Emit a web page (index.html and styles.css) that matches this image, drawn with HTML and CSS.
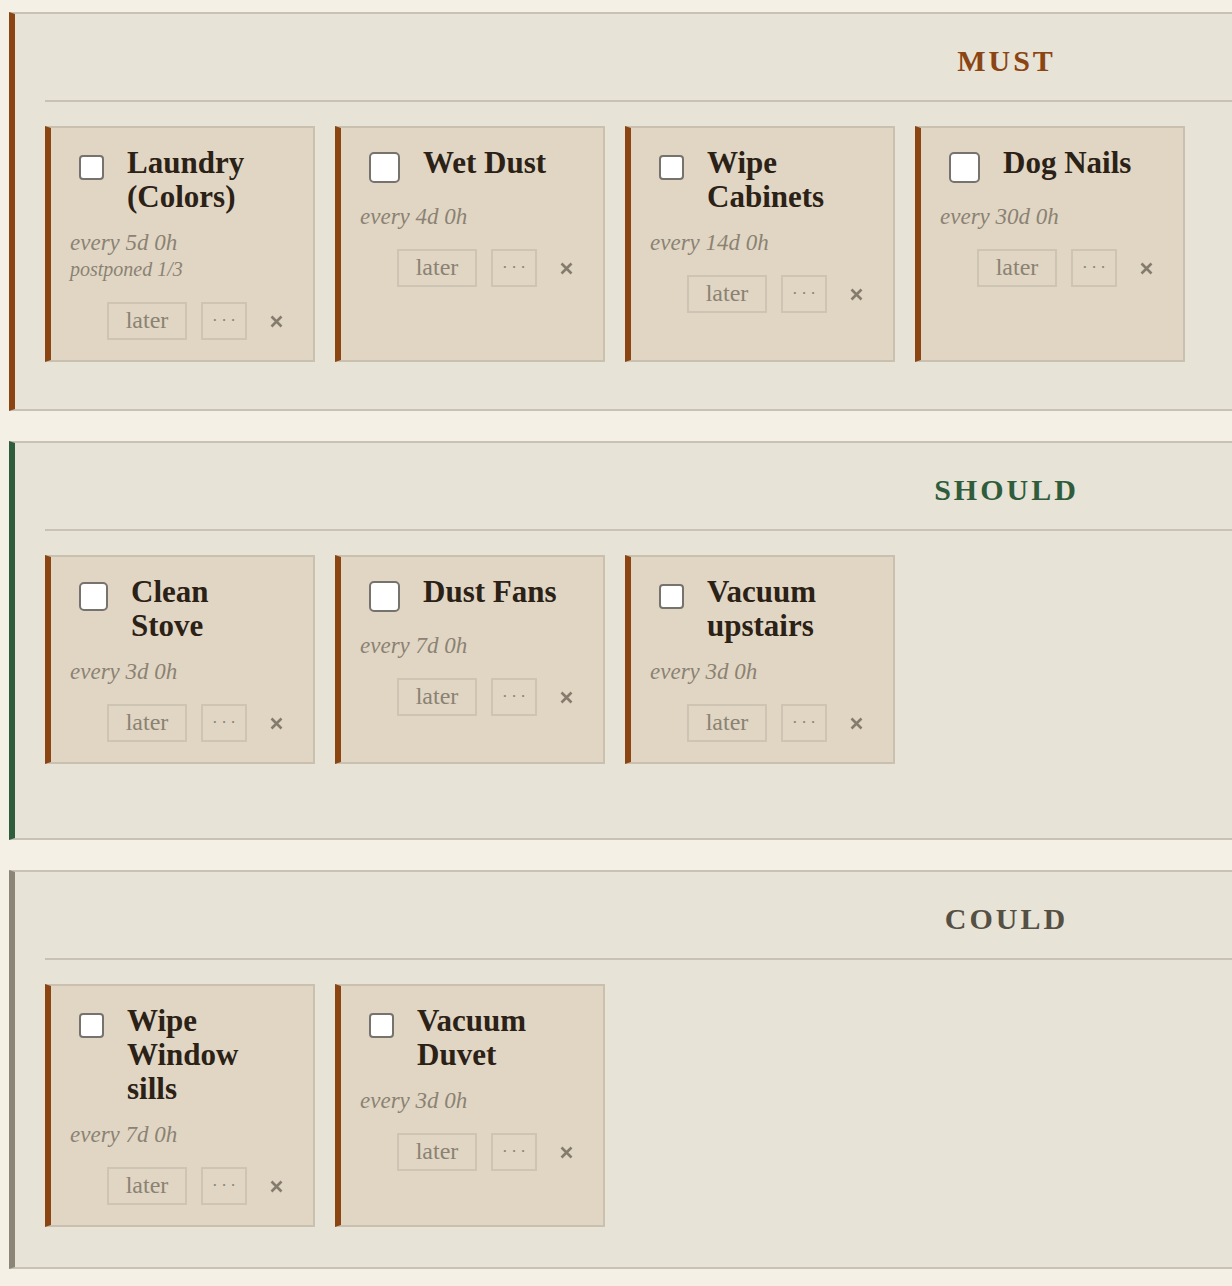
FILE: index.html
```html
<!DOCTYPE html>
<html lang="en">
<head>
<meta charset="utf-8">
<title>Chores</title>
<link rel="stylesheet" href="styles.css">
</head>
<body>
<main class="board">
  <section class="tier tier-must">
    <h2 class="tier-title">MUST</h2>
    <div class="cards">
      <article class="card">
        <div class="card-head"><input type="checkbox" class="check sm"><h3 class="card-title">Laundry (Colors)</h3></div>
        <div class="card-meta"><div class="every">every 5d 0h</div><div class="postponed">postponed 1/3</div></div>
        <div class="card-actions"><button class="btn btn-later">later</button><button class="btn btn-more">···</button><button class="btn-del" aria-label="delete"><svg class="x-icon" viewBox="0 0 13 13"><path d="M1.5 1.5L11.5 11.5M11.5 1.5L1.5 11.5"/></svg></button></div>
      </article>
      <article class="card">
        <div class="card-head"><input type="checkbox" class="check"><h3 class="card-title">Wet Dust</h3></div>
        <div class="card-meta"><div class="every">every 4d 0h</div></div>
        <div class="card-actions"><button class="btn btn-later">later</button><button class="btn btn-more">···</button><button class="btn-del" aria-label="delete"><svg class="x-icon" viewBox="0 0 13 13"><path d="M1.5 1.5L11.5 11.5M11.5 1.5L1.5 11.5"/></svg></button></div>
      </article>
      <article class="card">
        <div class="card-head"><input type="checkbox" class="check sm"><h3 class="card-title">Wipe Cabinets</h3></div>
        <div class="card-meta"><div class="every">every 14d 0h</div></div>
        <div class="card-actions"><button class="btn btn-later">later</button><button class="btn btn-more">···</button><button class="btn-del" aria-label="delete"><svg class="x-icon" viewBox="0 0 13 13"><path d="M1.5 1.5L11.5 11.5M11.5 1.5L1.5 11.5"/></svg></button></div>
      </article>
      <article class="card">
        <div class="card-head"><input type="checkbox" class="check"><h3 class="card-title">Dog Nails</h3></div>
        <div class="card-meta"><div class="every">every 30d 0h</div></div>
        <div class="card-actions"><button class="btn btn-later">later</button><button class="btn btn-more">···</button><button class="btn-del" aria-label="delete"><svg class="x-icon" viewBox="0 0 13 13"><path d="M1.5 1.5L11.5 11.5M11.5 1.5L1.5 11.5"/></svg></button></div>
      </article>
    </div>
  </section>

  <section class="tier tier-should">
    <h2 class="tier-title">SHOULD</h2>
    <div class="cards">
      <article class="card">
        <div class="card-head"><input type="checkbox" class="check md"><h3 class="card-title">Clean Stove</h3></div>
        <div class="card-meta"><div class="every">every 3d 0h</div></div>
        <div class="card-actions"><button class="btn btn-later">later</button><button class="btn btn-more">···</button><button class="btn-del" aria-label="delete"><svg class="x-icon" viewBox="0 0 13 13"><path d="M1.5 1.5L11.5 11.5M11.5 1.5L1.5 11.5"/></svg></button></div>
      </article>
      <article class="card">
        <div class="card-head"><input type="checkbox" class="check"><h3 class="card-title">Dust Fans</h3></div>
        <div class="card-meta"><div class="every">every 7d 0h</div></div>
        <div class="card-actions"><button class="btn btn-later">later</button><button class="btn btn-more">···</button><button class="btn-del" aria-label="delete"><svg class="x-icon" viewBox="0 0 13 13"><path d="M1.5 1.5L11.5 11.5M11.5 1.5L1.5 11.5"/></svg></button></div>
      </article>
      <article class="card">
        <div class="card-head"><input type="checkbox" class="check sm"><h3 class="card-title">Vacuum upstairs</h3></div>
        <div class="card-meta"><div class="every">every 3d 0h</div></div>
        <div class="card-actions"><button class="btn btn-later">later</button><button class="btn btn-more">···</button><button class="btn-del" aria-label="delete"><svg class="x-icon" viewBox="0 0 13 13"><path d="M1.5 1.5L11.5 11.5M11.5 1.5L1.5 11.5"/></svg></button></div>
      </article>
    </div>
  </section>

  <section class="tier tier-could">
    <h2 class="tier-title">COULD</h2>
    <div class="cards">
      <article class="card">
        <div class="card-head"><input type="checkbox" class="check sm"><h3 class="card-title">Wipe Window sills</h3></div>
        <div class="card-meta"><div class="every">every 7d 0h</div></div>
        <div class="card-actions"><button class="btn btn-later">later</button><button class="btn btn-more">···</button><button class="btn-del" aria-label="delete"><svg class="x-icon" viewBox="0 0 13 13"><path d="M1.5 1.5L11.5 11.5M11.5 1.5L1.5 11.5"/></svg></button></div>
      </article>
      <article class="card">
        <div class="card-head"><input type="checkbox" class="check sm"><h3 class="card-title">Vacuum Duvet</h3></div>
        <div class="card-meta"><div class="every">every 3d 0h</div></div>
        <div class="card-actions"><button class="btn btn-later">later</button><button class="btn btn-more">···</button><button class="btn-del" aria-label="delete"><svg class="x-icon" viewBox="0 0 13 13"><path d="M1.5 1.5L11.5 11.5M11.5 1.5L1.5 11.5"/></svg></button></div>
      </article>
    </div>
  </section>
</main>
</body>
</html>
```
FILE: styles.css
```css
html, body {
  margin: 0;
  background: #f5f0e6;
}

body {
  font-family: "Liberation Serif", "Times New Roman", serif;
  overflow-x: hidden;
}

.board {
  display: grid;
  grid-auto-rows: 1fr;
  row-gap: 30px;
  padding: 12px 0 40px 9px;
}

.tier {
  width: 1920px;
  background: #e8e3d7;
  border: 2px solid #c8c1b4;
  border-left: 6px solid #8b4513;
  padding: 0 30px 40px 30px;
}

.tier-must { border-left-color: #8b4513; }
.tier-should { border-left-color: #2f5d3b; }
.tier-could { border-left-color: #8a8576; }

.tier-title {
  margin: 0;
  padding: 29px 0 21px 3px;
  text-align: center;
  font-size: 30px;
  line-height: 36px;
  font-weight: bold;
  letter-spacing: 3px;
  border-bottom: 2px solid #c8c1b4;
}

.tier-must .tier-title { color: #8b4513; }
.tier-should .tier-title { color: #2f5d3b; }
.tier-could .tier-title { color: #555043; }

.cards {
  display: flex;
  gap: 20px;
  margin-top: 24px;
  align-items: stretch;
}

.card {
  flex: 0 0 270px;
  box-sizing: border-box;
  background: #e0d6c3;
  border: 2px solid #c9c0b0;
  border-left: 6px solid #8b4513;
  padding: 18px 28px 20px 19px;
}

.card-head {
  display: flex;
  align-items: flex-start;
}

.check {
  -webkit-appearance: none;
  appearance: none;
  box-sizing: border-box;
  flex: none;
  width: 31px;
  height: 31px;
  margin: 6px 3px 5px 9px;
  background: #ffffff;
  border: 2px solid #76736f;
  border-radius: 5px;
}

.check.sm {
  width: 25px;
  height: 25px;
  margin-top: 9px;
  margin-bottom: 8px;
  border-radius: 4px;
}

.check.md {
  width: 29px;
  height: 29px;
  margin-top: 7px;
  margin-bottom: 6px;
}

.card-title {
  flex: 1 1 0;
  min-width: 0;
  margin: 0 0 0 20px;
  font-size: 31px;
  line-height: 34px;
  font-weight: bold;
  color: #2b2116;
}

.card-meta {
  margin-top: 15px;
  color: #8b8274;
  font-style: italic;
}

.every {
  font-size: 23px;
  line-height: 27px;
}

.postponed {
  font-size: 20px;
  line-height: 27px;
}

.card-actions {
  display: flex;
  justify-content: flex-end;
  align-items: center;
  gap: 14px;
  margin-top: 19px;
}

.btn {
  box-sizing: border-box;
  display: flex;
  align-items: center;
  justify-content: center;
  height: 38px;
  padding: 0 0 2px 0;
  background: transparent;
  border: 2px solid #cdc4b4;
  color: #8b8274;
  font-family: inherit;
  font-size: 24px;
}

.btn-later { width: 80px; }

.btn-more {
  width: 46px;
  font-size: 17px;
  letter-spacing: 3.5px;
  padding: 0 0 0 3.5px;
}

.btn-del {
  display: flex;
  align-items: center;
  height: 38px;
  margin-left: 9px;
  padding: 0 2px 0 0;
  background: none;
  border: 0;
}

.x-icon {
  width: 13px;
  height: 13px;
  fill: none;
  stroke: #857c6e;
  stroke-width: 2.6;
}
```
